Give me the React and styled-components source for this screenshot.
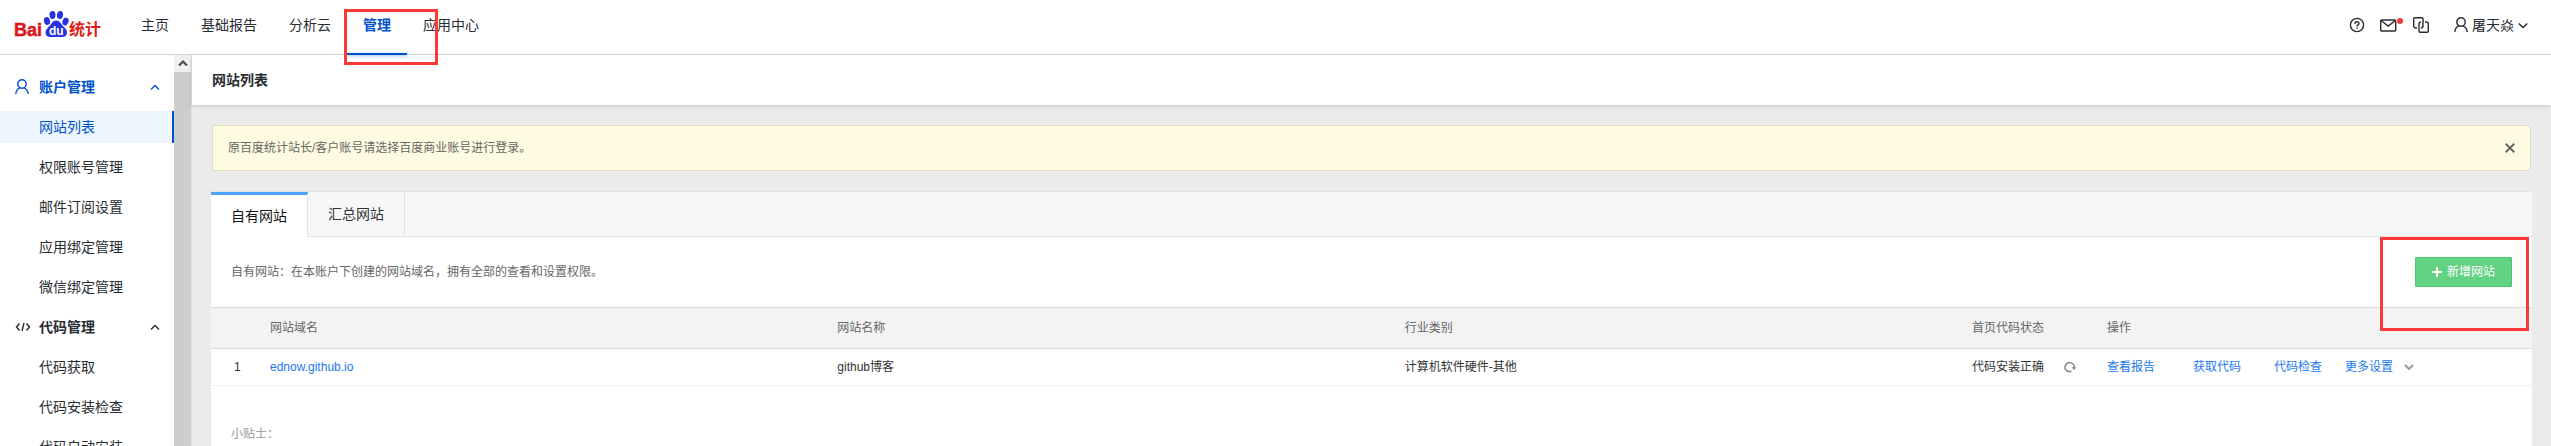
import React from "react";
import styled, { createGlobalStyle } from "styled-components";

const Global = createGlobalStyle`
  *, *::before, *::after { box-sizing: border-box; }
  body {
    margin: 0;
    background: #ebebeb;
    color: #282c33;
    font: 14px/20px "Liberation Sans", "Noto Sans CJK SC", sans-serif;
  }
  a { color: inherit; text-decoration: none; }
  button { font: inherit; color: inherit; border: 0; padding: 0; background: none; cursor: pointer; }
  svg { display: block; flex: none; }
`;

const Shell = styled.div`
  height: 100vh;
  display: flex;
  flex-direction: column;
  overflow: hidden;
`;

const Header = styled.header`
  flex: none;
  height: 55px;
  display: flex;
  align-items: stretch;
  padding: 0 23px 0 14px;
  background: #fff;
  border-bottom: 1px solid #cfd6d8;
`;

const Logo = styled.a`
  flex: none;
  width: 111px;
  padding-top: 10px;
`;

const Nav = styled.nav`
  display: flex;
  flex: 1;
`;

const NavLink = styled.a`
  position: relative;
  padding: 15px 16px 0;
  color: ${(p) => (p.$active ? "#0052cc" : "#282c33")};
  font-weight: ${(p) => (p.$active ? 700 : 400)};
  &::after {
    content: "";
    display: ${(p) => (p.$active ? "block" : "none")};
    position: absolute;
    left: 0;
    right: 0;
    bottom: -1px;
    height: 2px;
    background: #0052cc;
    box-shadow: 0 1px 3px rgba(0, 82, 204, 0.4);
  }
`;

const Marker = styled.span`
  position: absolute;
  z-index: 5;
  top: ${(p) => p.$top}px;
  right: ${(p) => p.$right}px;
  width: ${(p) => p.$width}px;
  height: ${(p) => p.$height}px;
  border: 3px solid #fc3939;
  pointer-events: none;
`;

const Tools = styled.div`
  display: flex;
  align-items: center;
  height: 50px;
  gap: 10px;
`;

const IconButton = styled.button`
  display: flex;
`;

const UserMenu = styled.button`
  display: flex;
  align-items: center;
  gap: 4px;
  margin-left: 15px;
`;

const Body = styled.div`
  flex: 1;
  min-height: 0;
  display: flex;
`;

const Sidebar = styled.aside`
  flex: none;
  width: 174px;
  padding-top: 16px;
  overflow: hidden;
  background: #fff;
`;

const Group = styled.button`
  width: 100%;
  height: 32px;
  margin-bottom: 8px;
  padding: 0 14px 0 15px;
  display: grid;
  grid-template-columns: 24px 1fr 10px;
  align-items: center;
  text-align: left;
  font-weight: 700;
  color: ${(p) => (p.$active ? "#0052cc" : "#282c33")};
`;

const SideLink = styled.a`
  display: block;
  height: 32px;
  margin-bottom: 8px;
  padding-left: 39px;
  line-height: 32px;
  border-right: 2px solid ${(p) => (p.$active ? "#0052cc" : "transparent")};
  color: ${(p) => (p.$active ? "#0052cc" : "#282c33")};
  background: ${(p) => (p.$active ? "#edf5ff" : "transparent")};
`;

const ScrollTrack = styled.div`
  flex: none;
  width: 18px;
  background: #cdcdcd;
  border-right: 1px solid #e2e2e2;
`;

const ScrollUp = styled.div`
  height: 17px;
  display: flex;
  align-items: center;
  justify-content: center;
  color: #505050;
  background: #f0f0f0;
`;

const Main = styled.main`
  flex: 1;
  min-width: 0;
  display: flex;
  flex-direction: column;
`;

const PageTitle = styled.h1`
  flex: none;
  margin: 0;
  height: 50px;
  padding: 15px 20px;
  font-size: 14px;
  line-height: 20px;
  background: #fff;
  box-shadow: 0 1px 4px rgba(0, 0, 0, 0.16);
`;

const Content = styled.div`
  flex: 1;
  display: flex;
  flex-direction: column;
  gap: 20px;
  padding: 20px 19px 0;
`;

const Notice = styled.div`
  display: flex;
  align-items: center;
  justify-content: space-between;
  height: 46px;
  margin: 0 1px;
  padding: 0 15px;
  border: 1px solid #dfdcc0;
  border-radius: 2px;
  background: #fffbe1;
  color: #666;
  font-size: 12px;
`;

const Panel = styled.section`
  position: relative;
  flex: 1;
  background: #fff;
  border-top: 1px solid #e2e2e2;
`;

const Tabs = styled.div`
  display: flex;
  height: 45px;
  background: linear-gradient(#e2e2e2, #e2e2e2) bottom / 100% 1px no-repeat #f7f7f7;
`;

const Tab = styled.button`
  width: 97px;
  padding: ${(p) => (p.$active ? "0" : "0 0 1px")};
  color: ${(p) => (p.$active ? "#111" : "#333")};
  border-right: 1px solid #e2e2e2;
  border-top: ${(p) => (p.$active ? "3px solid #49a2fc" : "0")};
  background: ${(p) => (p.$active ? "#fff" : "transparent")};
`;

const Intro = styled.div`
  display: flex;
  align-items: center;
  justify-content: space-between;
  height: 70px;
  padding: 0 20px;
  color: #666;
  font-size: 12px;
`;

const AddButton = styled.button`
  display: flex;
  align-items: center;
  gap: 5px;
  height: 30px;
  padding: 0 16px;
  border: 1px solid #4ac66e;
  border-radius: 1px;
  background: #63d283;
  color: #fff;
`;

const Table = styled.table`
  width: 100%;
  table-layout: fixed;
  border-collapse: separate;
  border-spacing: 0;
  font-size: 12px;
`;

const Col = styled.col`
  width: ${(p) => (p.$width ? `${p.$width}px` : "auto")};
`;

const Th = styled.th`
  height: 42px;
  padding: 0;
  text-align: left;
  font-weight: 400;
  color: #666;
  background: #f3f3f3;
  border: solid #dcdcdc;
  border-width: 1px 0;
`;

const Td = styled.td`
  height: 37px;
  padding: 0 0 0 ${(p) => (p.$index ? 23 : 0)}px;
  color: #333;
  border-bottom: 1px solid #eee;
`;

const Status = styled.div`
  display: flex;
  align-items: center;
  gap: 20px;
`;

const Actions = styled.div`
  display: grid;
  grid-template-columns: 86px 81px 71px 59px 10px;
  align-items: center;
`;

const BlueLink = styled.a`
  color: #1c78ee;
`;

const Tips = styled.p`
  margin: 0;
  padding: 38px 20px;
  color: #999;
  font-size: 12px;
`;

function BaiduLogo() {
  return (
    <svg width="88" height="30" viewBox="0 0 88 30" role="img" aria-label="Baidu 统计">
      <text x="0" y="26" fontSize="18" fontWeight="700" fill="#dd1420" stroke="#dd1420" strokeWidth=".5" fontFamily="Liberation Sans, sans-serif">Bai</text>
      <g fill="#2832e0">
        <ellipse cx="33" cy="11" rx="3" ry="4" transform="rotate(-15 33 11)" />
        <ellipse cx="38.5" cy="5" rx="3" ry="4" />
        <ellipse cx="46" cy="5" rx="3" ry="4" transform="rotate(8 46 5)" />
        <ellipse cx="51.5" cy="11.5" rx="3" ry="4" transform="rotate(20 51.5 11.5)" />
        <path d="M42 10.500c4 0 5 3.500 7 5.500 2 2 4 3.500 4 6.500 0 3-2 4.500-5 4.500H36.500c-3.500 0-5-1.800-5-4.500 0-3 2-4.500 4-6.500s3-5.500 6.500-5.500z" />
      </g>
      <text x="35" y="25" fontSize="12" fontWeight="700" fill="#fff" fontFamily="Liberation Sans, sans-serif">du</text>
      <text x="55" y="25" fontSize="16" fontWeight="700" fill="#dd1f1a" fontFamily="Noto Sans CJK SC, sans-serif">统计</text>
    </svg>
  );
}

const stroke = { fill: "none", stroke: "currentColor" };

const PersonIcon = () => (
  <svg width="14" height="16" viewBox="0 0 14 16" {...stroke} strokeWidth="1.400">
    <circle cx="7" cy="5" r="4.200" />
    <path d="M.8 15c.2-3.400 2.200-5.500 4.400-6.200M13.200 15c-.2-3.400-2.200-5.500-4.400-6.200" />
  </svg>
);

const CodeIcon = () => (
  <svg width="16" height="10" viewBox="0 0 16 10" {...stroke} strokeWidth="1.400">
    <path d="M4.500 1.500 1.500 5l3 3.500M11.500 1.500l3 3.500-3 3.500M9 1 7 9" />
  </svg>
);

const Chevron = ({ up, weight = 1.3 }) => (
  <svg width="10" height="7" viewBox="0 0 10 7" {...stroke} strokeWidth={weight}>
    <path d={up ? "M1 5.500 5 1.500l4 4" : "M.8 1.500 5 5.500l4.200-4"} />
  </svg>
);

const HelpIcon = () => (
  <svg width="16" height="16" viewBox="0 0 16 16" {...stroke} strokeWidth="1.400">
    <circle cx="8" cy="8" r="6.600" />
    <path d="M6 6.700C6 5.400 6.800 4.700 8 4.700s2 .7 2 1.800c0 1.300-2 1.500-2 3M8 10.500v1.300" />
  </svg>
);

const MailIcon = () => (
  <svg width="28" height="16" viewBox="-4 0 28 16" {...stroke} strokeWidth="1.400">
    <rect x="1.700" y="3" width="15" height="11" rx="1" />
    <path d="m2 3.500 7.200 5.500 7.200-5.500" />
    <circle cx="21" cy="4" r="3" fill="#f03a3a" stroke="none" />
  </svg>
);

const CopyIcon = () => (
  <svg width="16" height="16" viewBox="0 0 16 16" {...stroke} strokeWidth="1.400">
    <path d="M4 11H2.700a2 2 0 0 1-2-2V1.700a1 1 0 0 1 1-1H9a1 1 0 0 1 1 1V9a2 2 0 0 1-2 2" />
    <path d="M12 5h1.300a2 2 0 0 1 2 2v7.300a1 1 0 0 1-1 1H7a1 1 0 0 1-1-1V7a2 2 0 0 1 2-2" />
  </svg>
);

const CloseIcon = () => (
  <svg width="10" height="10" viewBox="0 0 10 10" {...stroke} strokeWidth="2">
    <path d="m.7.7 8.600 8.600M9.300.7.7 9.300" />
  </svg>
);

const PlusIcon = () => (
  <svg width="10" height="10" viewBox="0 0 10 10" {...stroke} strokeWidth="2">
    <path d="M5 0v10M0 5h10" />
  </svg>
);

const RefreshIcon = () => (
  <svg width="12" height="12" viewBox="0 0 12 12" fill="none" stroke="#808080" strokeWidth="1.400">
    <path d="M7.500 10.500H3.800A4.600 4.600 0 1 1 10.200 7" />
    <path d="M7.700 6.200h4.300L9.900 9z" fill="#808080" stroke="none" />
  </svg>
);

const NAV = ["主页", "基础报告", "分析云", "管理", "应用中心"];

const MENU = [
  {
    title: "账户管理",
    icon: PersonIcon,
    active: true,
    items: ["网站列表", "权限账号管理", "邮件订阅设置", "应用绑定管理", "微信绑定管理"],
  },
  {
    title: "代码管理",
    icon: CodeIcon,
    items: ["代码获取", "代码安装检查", "代码自动安装"],
  },
];

export default function App() {
  return (
    <Shell>
      <Global />
      <Header>
        <Logo href="#"><BaiduLogo /></Logo>
        <Nav>
          {NAV.map((name) => (
            <NavLink key={name} href="#" $active={name === "管理"}>
              {name}
              {name === "管理" && <Marker $top={9} $right={-31} $width={94} $height={56} />}
            </NavLink>
          ))}
        </Nav>
        <Tools>
          <IconButton aria-label="帮助"><HelpIcon /></IconButton>
          <IconButton aria-label="消息"><MailIcon /></IconButton>
          <IconButton aria-label="切换"><CopyIcon /></IconButton>
          <UserMenu>
            <PersonIcon />
            屠天焱
            <Chevron weight={1.5} />
          </UserMenu>
        </Tools>
      </Header>
      <Body>
        <Sidebar>
          {MENU.map(({ title, icon: Icon, active, items }) => (
            <React.Fragment key={title}>
              <Group $active={active}>
                <Icon />
                {title}
                <Chevron up />
              </Group>
              {items.map((item) => (
                <SideLink key={item} href="#" $active={item === "网站列表"}>{item}</SideLink>
              ))}
            </React.Fragment>
          ))}
        </Sidebar>
        <ScrollTrack>
          <ScrollUp><Chevron up weight={2.2} /></ScrollUp>
        </ScrollTrack>
        <Main>
          <PageTitle>网站列表</PageTitle>
          <Content>
            <Notice>
              原百度统计站长/客户账号请选择百度商业账号进行登录。
              <IconButton aria-label="关闭"><CloseIcon /></IconButton>
            </Notice>
            <Panel>
              <Marker $top={45} $right={3} $width={149} $height={94} />
              <Tabs>
                <Tab $active>自有网站</Tab>
                <Tab>汇总网站</Tab>
              </Tabs>
              <Intro>
                自有网站：在本账户下创建的网站域名，拥有全部的查看和设置权限。
                <AddButton><PlusIcon />新增网站</AddButton>
              </Intro>
              <Table>
                <colgroup>
                  <Col $width={59} />
                  <Col />
                  <Col />
                  <Col />
                  <Col $width={135} />
                  <Col $width={425} />
                </colgroup>
                <thead>
                  <tr>
                    <Th />
                    <Th>网站域名</Th>
                    <Th>网站名称</Th>
                    <Th>行业类别</Th>
                    <Th>首页代码状态</Th>
                    <Th>操作</Th>
                  </tr>
                </thead>
                <tbody>
                  <tr>
                    <Td $index>1</Td>
                    <Td><BlueLink href="#">ednow.github.io</BlueLink></Td>
                    <Td>github博客</Td>
                    <Td>计算机软件硬件-其他</Td>
                    <Td>
                      <Status>
                        代码安装正确
                        <IconButton aria-label="刷新"><RefreshIcon /></IconButton>
                      </Status>
                    </Td>
                    <Td>
                      <Actions>
                        <BlueLink href="#">查看报告</BlueLink>
                        <BlueLink href="#">获取代码</BlueLink>
                        <BlueLink href="#">代码检查</BlueLink>
                        <BlueLink href="#">更多设置</BlueLink>
                        <svg width="10" height="6" viewBox="0 0 10 6" fill="none" stroke="#999" strokeWidth="2">
                          <path d="m1 1 4 4 4-4" />
                        </svg>
                      </Actions>
                    </Td>
                  </tr>
                </tbody>
              </Table>
              <Tips>小贴士：</Tips>
            </Panel>
          </Content>
        </Main>
      </Body>
    </Shell>
  );
}
